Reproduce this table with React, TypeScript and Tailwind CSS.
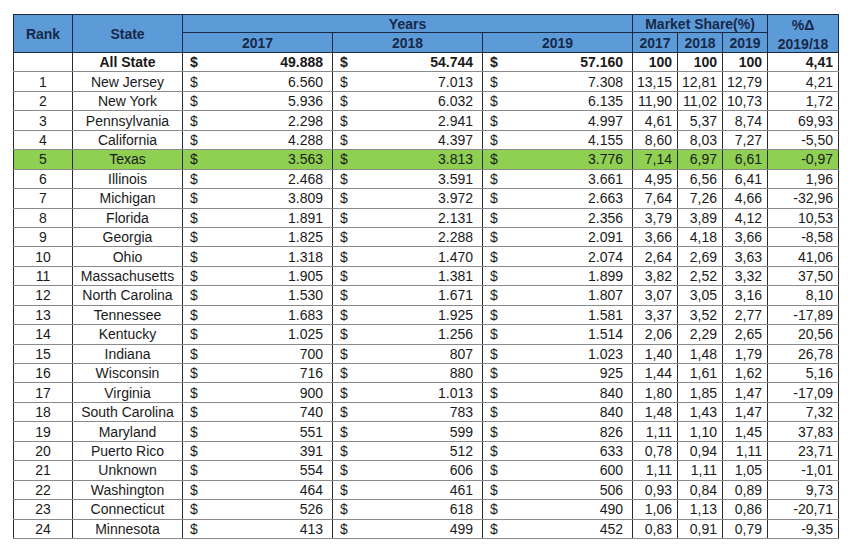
type Row = {
  rank: string;
  state: string;
  y17: string;
  y18: string;
  y19: string;
  s17: string;
  s18: string;
  s19: string;
  delta: string;
};

const rows: Row[] = [
  { rank: '1', state: 'New Jersey', y17: '6.560', y18: '7.013', y19: '7.308', s17: '13,15', s18: '12,81', s19: '12,79', delta: '4,21' },
  { rank: '2', state: 'New York', y17: '5.936', y18: '6.032', y19: '6.135', s17: '11,90', s18: '11,02', s19: '10,73', delta: '1,72' },
  { rank: '3', state: 'Pennsylvania', y17: '2.298', y18: '2.941', y19: '4.997', s17: '4,61', s18: '5,37', s19: '8,74', delta: '69,93' },
  { rank: '4', state: 'California', y17: '4.288', y18: '4.397', y19: '4.155', s17: '8,60', s18: '8,03', s19: '7,27', delta: '-5,50' },
  { rank: '5', state: 'Texas', y17: '3.563', y18: '3.813', y19: '3.776', s17: '7,14', s18: '6,97', s19: '6,61', delta: '-0,97' },
  { rank: '6', state: 'Illinois', y17: '2.468', y18: '3.591', y19: '3.661', s17: '4,95', s18: '6,56', s19: '6,41', delta: '1,96' },
  { rank: '7', state: 'Michigan', y17: '3.809', y18: '3.972', y19: '2.663', s17: '7,64', s18: '7,26', s19: '4,66', delta: '-32,96' },
  { rank: '8', state: 'Florida', y17: '1.891', y18: '2.131', y19: '2.356', s17: '3,79', s18: '3,89', s19: '4,12', delta: '10,53' },
  { rank: '9', state: 'Georgia', y17: '1.825', y18: '2.288', y19: '2.091', s17: '3,66', s18: '4,18', s19: '3,66', delta: '-8,58' },
  { rank: '10', state: 'Ohio', y17: '1.318', y18: '1.470', y19: '2.074', s17: '2,64', s18: '2,69', s19: '3,63', delta: '41,06' },
  { rank: '11', state: 'Massachusetts', y17: '1.905', y18: '1.381', y19: '1.899', s17: '3,82', s18: '2,52', s19: '3,32', delta: '37,50' },
  { rank: '12', state: 'North Carolina', y17: '1.530', y18: '1.671', y19: '1.807', s17: '3,07', s18: '3,05', s19: '3,16', delta: '8,10' },
  { rank: '13', state: 'Tennessee', y17: '1.683', y18: '1.925', y19: '1.581', s17: '3,37', s18: '3,52', s19: '2,77', delta: '-17,89' },
  { rank: '14', state: 'Kentucky', y17: '1.025', y18: '1.256', y19: '1.514', s17: '2,06', s18: '2,29', s19: '2,65', delta: '20,56' },
  { rank: '15', state: 'Indiana', y17: '700', y18: '807', y19: '1.023', s17: '1,40', s18: '1,48', s19: '1,79', delta: '26,78' },
  { rank: '16', state: 'Wisconsin', y17: '716', y18: '880', y19: '925', s17: '1,44', s18: '1,61', s19: '1,62', delta: '5,16' },
  { rank: '17', state: 'Virginia', y17: '900', y18: '1.013', y19: '840', s17: '1,80', s18: '1,85', s19: '1,47', delta: '-17,09' },
  { rank: '18', state: 'South Carolina', y17: '740', y18: '783', y19: '840', s17: '1,48', s18: '1,43', s19: '1,47', delta: '7,32' },
  { rank: '19', state: 'Maryland', y17: '551', y18: '599', y19: '826', s17: '1,11', s18: '1,10', s19: '1,45', delta: '37,83' },
  { rank: '20', state: 'Puerto Rico', y17: '391', y18: '512', y19: '633', s17: '0,78', s18: '0,94', s19: '1,11', delta: '23,71' },
  { rank: '21', state: 'Unknown', y17: '554', y18: '606', y19: '600', s17: '1,11', s18: '1,11', s19: '1,05', delta: '-1,01' },
  { rank: '22', state: 'Washington', y17: '464', y18: '461', y19: '506', s17: '0,93', s18: '0,84', s19: '0,89', delta: '9,73' },
  { rank: '23', state: 'Connecticut', y17: '526', y18: '618', y19: '490', s17: '1,06', s18: '1,13', s19: '0,86', delta: '-20,71' },
  { rank: '24', state: 'Minnesota', y17: '413', y18: '499', y19: '452', s17: '0,83', s18: '0,91', s19: '0,79', delta: '-9,35' },
];

const th = 'border border-[#1b2a44] font-bold text-[#17294a] p-0 leading-none';
const td = 'border-x border-x-[#2b2b2b] border-y border-y-[#8a8a8a] p-0 leading-none';

function Money({ value, bold }: { value: string; bold?: boolean }) {
  return (
    <td className={td}>
      <div className={bold ? 'flex justify-between pl-[7px] pr-[9px] font-bold' : 'flex justify-between pl-[7px] pr-[9px]'}>
        <span>$</span>
        <span>{value}</span>
      </div>
    </td>
  );
}

export default function App() {
  return (
    <div className="min-h-[551px] w-[850px] bg-white pl-[13px] pt-[14px] font-['Liberation_Sans',Arial,sans-serif] text-[14px] text-[#1a1a1a]">
      <table className="w-[825px] table-fixed border-collapse border border-[#1b2a44]">
        <colgroup>
          <col className="w-[59px]" />
          <col className="w-[110px]" />
          <col className="w-[150px]" />
          <col className="w-[150px]" />
          <col className="w-[150px]" />
          <col className="w-[45px]" />
          <col className="w-[45px]" />
          <col className="w-[45px]" />
          <col className="w-[71px]" />
        </colgroup>
        <thead className="bg-[#5d9bd8]">
          <tr className="h-[18px]">
            <th rowSpan={2} className={th}>Rank</th>
            <th rowSpan={2} className={th}>State</th>
            <th colSpan={3} className={th}>Years</th>
            <th colSpan={3} className={th}>Market Share(%)</th>
            <th rowSpan={2} className={th}>
              <div className="flex flex-col items-center gap-[5px] pt-[1px]">
                <span>%Δ</span>
                <span>2019/18</span>
              </div>
            </th>
          </tr>
          <tr className="h-[20px]">
            <th className={th}>2017</th>
            <th className={th}>2018</th>
            <th className={th}>2019</th>
            <th className={th}>2017</th>
            <th className={th}>2018</th>
            <th className={th}>2019</th>
          </tr>
        </thead>
        <tbody>
          <tr className="h-[19.44px] font-bold">
            <td className={td}></td>
            <td className={td + ' text-center'}>All State</td>
            <Money value="49.888" bold />
            <Money value="54.744" bold />
            <Money value="57.160" bold />
            <td className={td + ' pr-[5px] text-right'}>100</td>
            <td className={td + ' pr-[5px] text-right'}>100</td>
            <td className={td + ' pr-[5px] text-right'}>100</td>
            <td className={td + ' pr-[5px] text-right'}>4,41</td>
          </tr>
          {rows.map((r) => (
            <tr key={r.rank} className={r.state === 'Texas' ? 'h-[19.44px] bg-[#8fcf52]' : 'h-[19.44px]'}>
              <td className={td + ' text-center'}>{r.rank}</td>
              <td className={td + ' text-center'}>{r.state}</td>
              <Money value={r.y17} />
              <Money value={r.y18} />
              <Money value={r.y19} />
              <td className={td + ' pr-[5px] text-right'}>{r.s17}</td>
              <td className={td + ' pr-[5px] text-right'}>{r.s18}</td>
              <td className={td + ' pr-[5px] text-right'}>{r.s19}</td>
              <td className={td + ' pr-[5px] text-right'}>{r.delta}</td>
            </tr>
          ))}
        </tbody>
      </table>
    </div>
  );
}
